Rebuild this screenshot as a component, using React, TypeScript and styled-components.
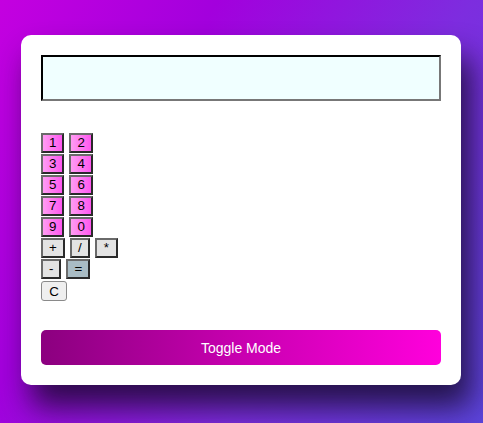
import React, { useState } from "react";
import styled, { createGlobalStyle } from "styled-components";

const Global = createGlobalStyle`
  html, body { margin: 0; padding: 0; }
  body {
    min-height: 423px;
    background: linear-gradient(120deg, #c400e0 0%, #a300dd 30%, #7d2ddf 65%, #5c45dc 100%);
    font-family: "Liberation Sans", Arial, sans-serif;
    overflow: hidden;
  }
`;

const Page = styled.div`
  display: flex;
  justify-content: flex-start;
  padding: 35px 0 0 21px;
  min-height: 423px;
  box-sizing: border-box;
`;

const Card = styled.div`
  width: 440px;
  height: 350px;
  box-sizing: border-box;
  padding: 20px;
  background: #fff;
  border-radius: 10px;
  box-shadow: 10px 22px 30px rgba(20, 10, 40, 0.8);
  display: flex;
  flex-direction: column;
`;

const Display = styled.input`
  width: 400px;
  height: 47px;
  box-sizing: border-box;
  border: 2px inset #777;
  border-top-color: #222;
  border-left-color: #222;
  background: #f0ffff;
  font-size: 20px;
  padding: 0 8px;
  outline: none;
`;

const Keys = styled.div`
  margin-top: 32px;
  display: flex;
  flex-direction: column;
  gap: 1px;
  height: 166px;
`;

const Row = styled.div`
  display: flex;
  gap: 5px;
`;

type Kind = "digit" | "op" | "eq";

const Key = styled.button<{ $kind: Kind; $w?: number }>`
  font-family: "Liberation Sans", Arial, sans-serif;
  font-size: 13.33px;
  height: 20px;
  min-width: ${(p) => p.$w ?? 23}px;
  padding: 0 6px;
  box-sizing: border-box;
  color: #000;
  border: 2px solid;
  border-color: #6a6a6a #2a2a2a #2a2a2a #6a6a6a;
  background: ${(p) =>
    p.$kind === "digit"
      ? "linear-gradient(to right, #ff9cf2, #ff58f0)"
      : p.$kind === "eq"
      ? "#a9bcc4"
      : "#e3e3e3"};
  line-height: 14px;
  cursor: pointer;
`;

const Clear = styled.button`
  font-family: "Liberation Sans", Arial, sans-serif;
  font-size: 13.33px;
  height: 20px;
  width: 26px;
  padding: 0;
  margin-top: 1px;
  background: #efefef;
  border: 1px solid #8a8a8a;
  border-radius: 3px;
  color: #000;
`;

const Toggle = styled.button`
  margin-top: 31px;
  width: 400px;
  height: 35px;
  border: none;
  border-radius: 5px;
  background: linear-gradient(to right, #8b007f, #c800b0 50%, #ff00dc 100%);
  color: #fff;
  font-family: "Liberation Sans", Arial, sans-serif;
  font-size: 14px;
  cursor: pointer;
`;

export default function App() {
  const [value, setValue] = useState("");
  const press = (k: string) => setValue((v) => v + k);
  return (
    <>
      <Global />
      <Page>
        <Card>
          <Display value={value} readOnly />
          <Keys>
            {[["1", "2"], ["3", "4"], ["5", "6"], ["7", "8"], ["9", "0"]].map((r) => (
              <Row key={r.join()}>
                {r.map((d) => (
                  <Key key={d} $kind="digit" onClick={() => press(d)}>
                    {d}
                  </Key>
                ))}
              </Row>
            ))}
            <Row>
              <Key $kind="op" onClick={() => press("+")}>+</Key>
              <Key $kind="op" $w={20} onClick={() => press("/")}>/</Key>
              <Key $kind="op" onClick={() => press("*")}>*</Key>
            </Row>
            <Row>
              <Key $kind="op" $w={20} onClick={() => press("-")}>-</Key>
              <Key $kind="eq" onClick={() => setValue("")}>=</Key>
            </Row>
            <Row>
              <Clear onClick={() => setValue("")}>C</Clear>
            </Row>
          </Keys>
          <Toggle>Toggle Mode</Toggle>
        </Card>
      </Page>
    </>
  );
}
